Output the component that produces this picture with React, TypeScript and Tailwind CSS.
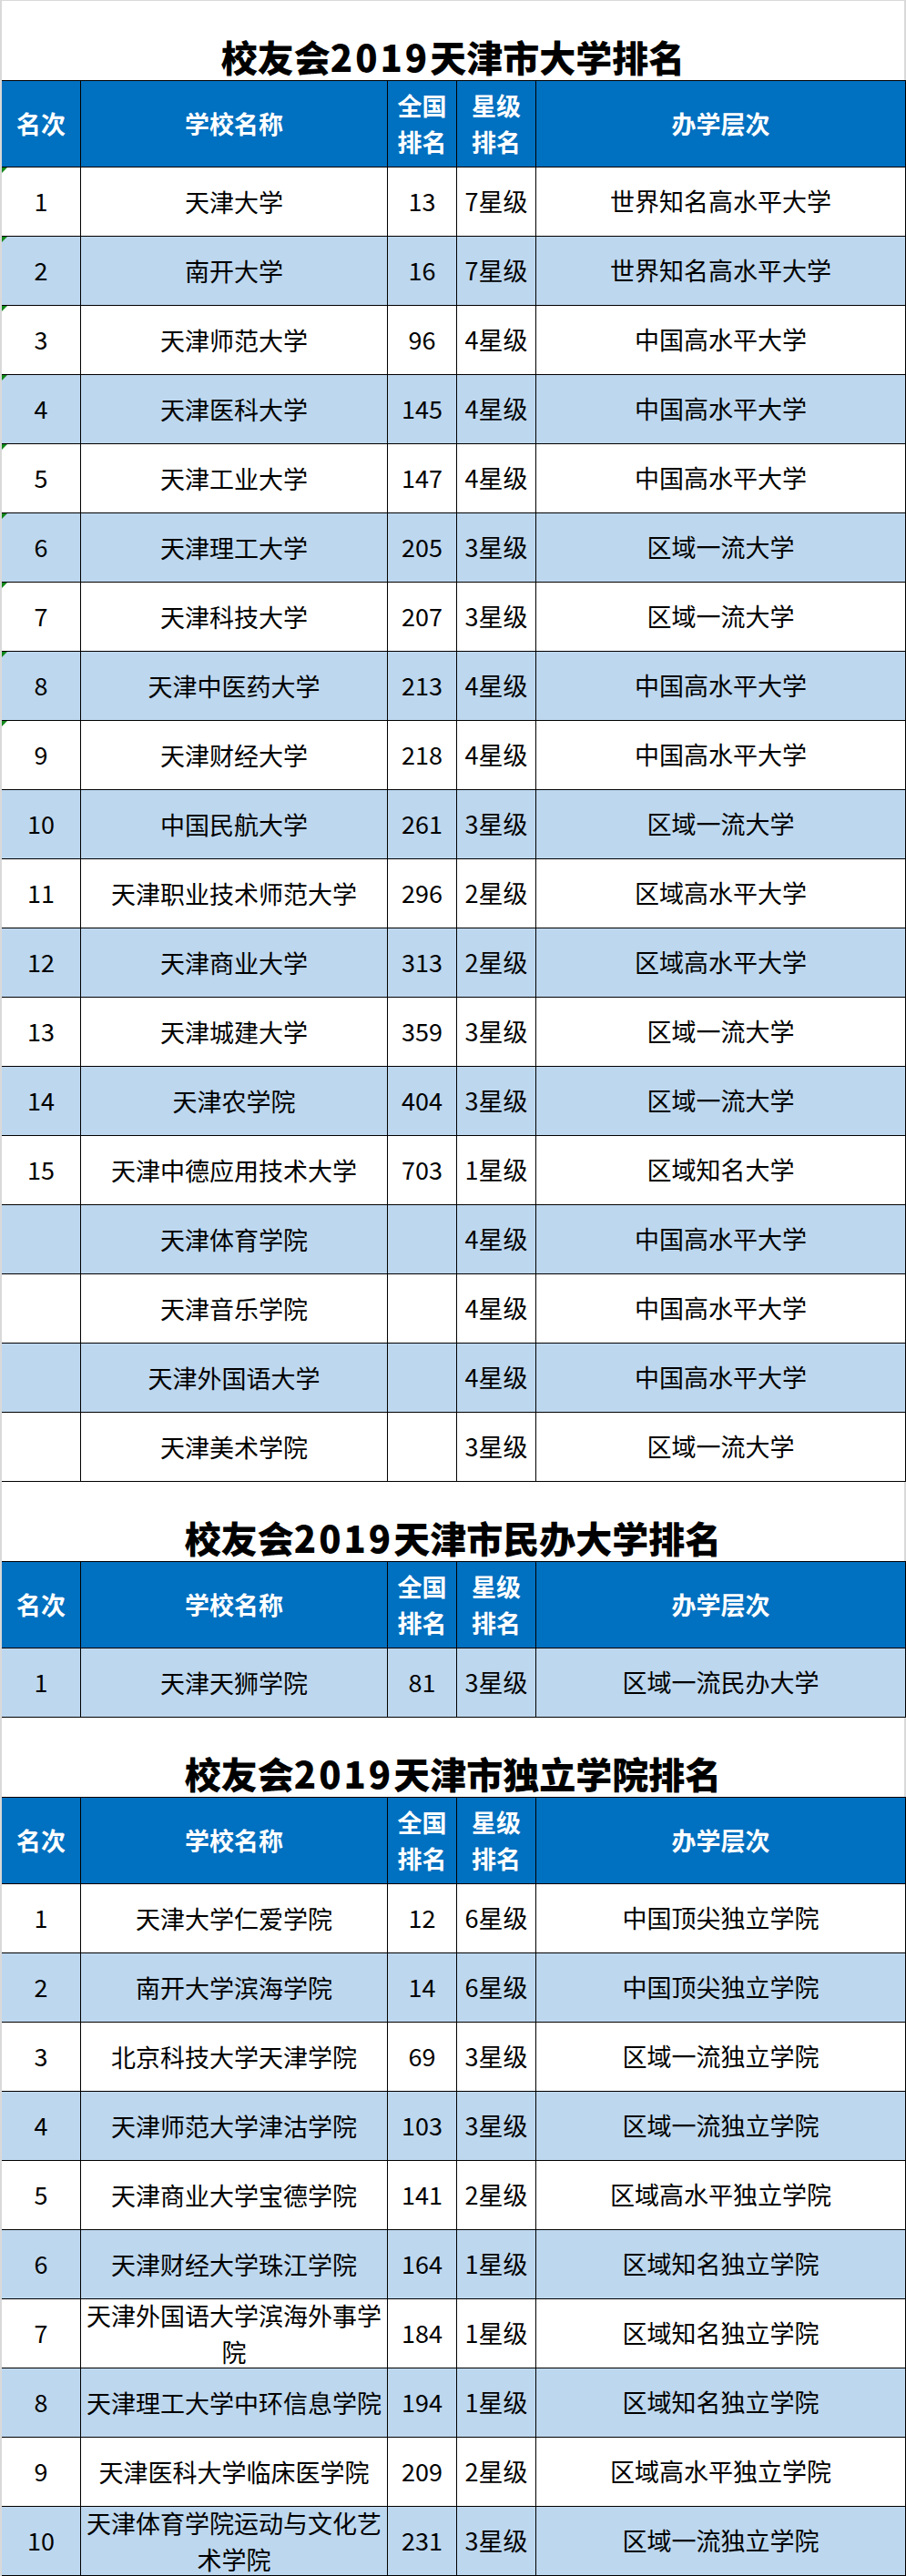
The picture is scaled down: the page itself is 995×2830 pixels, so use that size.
import React from "react";

type Row = [string, string, string, string, string];

const uni: Row[] = [
  ["1", "天津大学", "13", "7星级", "世界知名高水平大学"],
  ["2", "南开大学", "16", "7星级", "世界知名高水平大学"],
  ["3", "天津师范大学", "96", "4星级", "中国高水平大学"],
  ["4", "天津医科大学", "145", "4星级", "中国高水平大学"],
  ["5", "天津工业大学", "147", "4星级", "中国高水平大学"],
  ["6", "天津理工大学", "205", "3星级", "区域一流大学"],
  ["7", "天津科技大学", "207", "3星级", "区域一流大学"],
  ["8", "天津中医药大学", "213", "4星级", "中国高水平大学"],
  ["9", "天津财经大学", "218", "4星级", "中国高水平大学"],
  ["10", "中国民航大学", "261", "3星级", "区域一流大学"],
  ["11", "天津职业技术师范大学", "296", "2星级", "区域高水平大学"],
  ["12", "天津商业大学", "313", "2星级", "区域高水平大学"],
  ["13", "天津城建大学", "359", "3星级", "区域一流大学"],
  ["14", "天津农学院", "404", "3星级", "区域一流大学"],
  ["15", "天津中德应用技术大学", "703", "1星级", "区域知名大学"],
  ["", "天津体育学院", "", "4星级", "中国高水平大学"],
  ["", "天津音乐学院", "", "4星级", "中国高水平大学"],
  ["", "天津外国语大学", "", "4星级", "中国高水平大学"],
  ["", "天津美术学院", "", "3星级", "区域一流大学"],
];

const privateUni: Row[] = [["1", "天津天狮学院", "81", "3星级", "区域一流民办大学"]];

const indep: Row[] = [
  ["1", "天津大学仁爱学院", "12", "6星级", "中国顶尖独立学院"],
  ["2", "南开大学滨海学院", "14", "6星级", "中国顶尖独立学院"],
  ["3", "北京科技大学天津学院", "69", "3星级", "区域一流独立学院"],
  ["4", "天津师范大学津沽学院", "103", "3星级", "区域一流独立学院"],
  ["5", "天津商业大学宝德学院", "141", "2星级", "区域高水平独立学院"],
  ["6", "天津财经大学珠江学院", "164", "1星级", "区域知名独立学院"],
  ["7", "天津外国语大学滨海外事学院", "184", "1星级", "区域知名独立学院"],
  ["8", "天津理工大学中环信息学院", "194", "1星级", "区域知名独立学院"],
  ["9", "天津医科大学临床医学院", "209", "2星级", "区域高水平独立学院"],
  ["10", "天津体育学院运动与文化艺术学院", "231", "3星级", "区域一流独立学院"],
];

const cell = "flex items-center justify-center text-center border-r border-black shrink-0";

function Title({ text, first }: { text: [string, string, string]; first?: boolean }) {
  return (
    <div
      className={`${first ? "h-[88px] border-t border-t-[#d9d9d9]" : "h-[87px]"} border-r-2 border-r-[#d9d9d9] flex items-end justify-center pb-[6px] text-[40px] leading-[40px] font-black text-black`}
    >
      <span>
        {text[0]}
        <span className="tracking-[3px]">{text[1]}</span>
        {text[2]}
      </span>
    </div>
  );
}

function Header() {
  return (
    <div className="flex h-[96px] border-t border-b border-black bg-[#0070C0] text-white font-bold text-[27px]">
      <div className={`${cell} w-[87px]`}>名次</div>
      <div className={`${cell} w-[337px]`}>学校名称</div>
      <div className={`${cell} w-[76px] leading-[40px]`}>
        全国
        <br />
        排名
      </div>
      <div className={`${cell} w-[87px] leading-[40px]`}>
        星级
        <br />
        排名
      </div>
      <div className={`${cell} w-[406px]`}>办学层次</div>
    </div>
  );
}

function Body({ rows, startBlue, marks }: { rows: Row[]; startBlue?: boolean; marks?: number }) {
  return (
    <>
      {rows.map((r, i) => {
        const blue = startBlue ? i % 2 === 0 : i % 2 === 1;
        return (
          <div
            key={i}
            className={`flex h-[76px] border-b border-black text-[27px] text-black ${blue ? "bg-[#BDD7EE]" : "bg-white"}`}
          >
            <div className={`${cell} w-[87px] relative`}>
              {marks !== undefined && i < marks && (
                <span className="absolute left-0 top-0 w-0 h-0 border-t-[6px] border-t-[#12881a] border-r-[6px] border-r-transparent" />
              )}
              {r[0]}
            </div>
            <div className={`${cell} w-[337px] px-[4px] leading-[40px]`}>{r[1]}</div>
            <div className={`${cell} w-[76px]`}>{r[2]}</div>
            <div className={`${cell} w-[87px]`}>{r[3]}</div>
            <div className={`${cell} w-[406px]`}>{r[4]}</div>
          </div>
        );
      })}
    </>
  );
}

export default function App() {
  return (
    <div
      className="w-[995px] bg-white border-l-2 border-l-[#d9d9d9]"
      style={{ fontFamily: '"Noto Sans CJK SC", "Noto Sans", sans-serif' }}
    >
      <Title first text={["校友会", "2019", "天津市大学排名"]} />
      <Header />
      <Body rows={uni} marks={9} />
      <Title text={["校友会", "2019", "天津市民办大学排名"]} />
      <Header />
      <Body rows={privateUni} startBlue />
      <Title text={["校友会", "2019", "天津市独立学院排名"]} />
      <Header />
      <Body rows={indep} />
    </div>
  );
}
